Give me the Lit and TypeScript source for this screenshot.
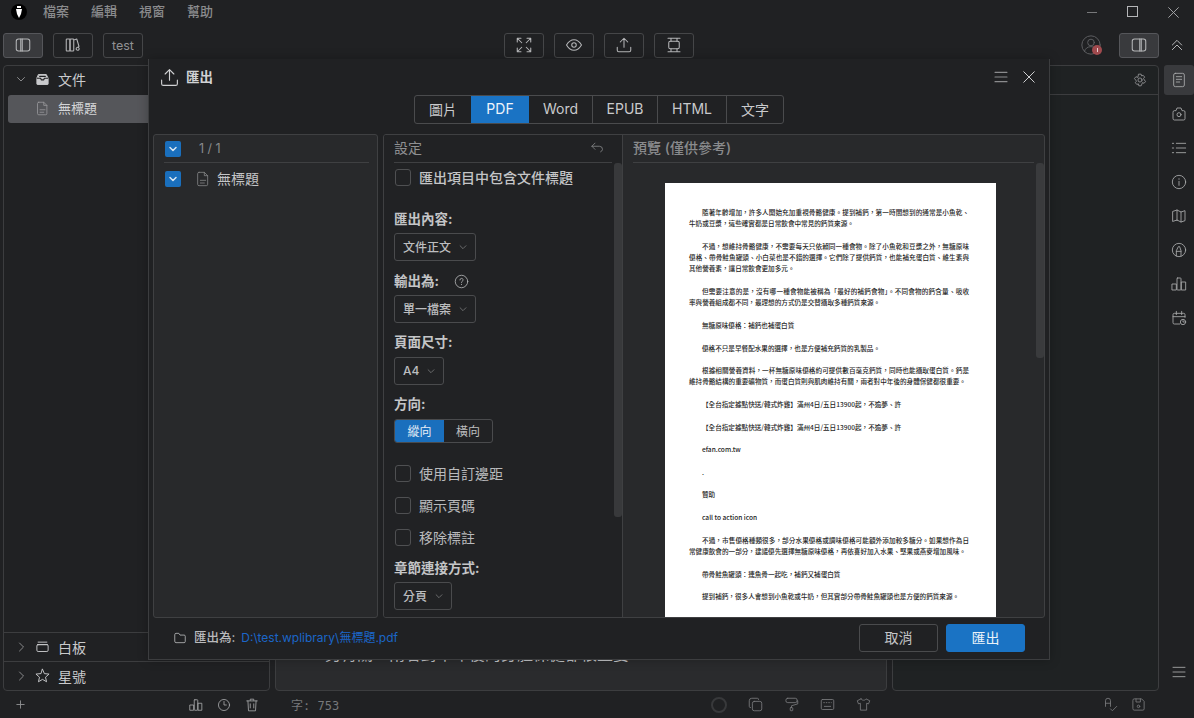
import { LitElement, html, css, svg } from 'lit';
import { customElement } from 'lit/decorators.js';

// icon outlines, all on a 24 unit box
const ICONS: Record<string, unknown> = {
  sidebarL: svg`<rect x="3" y="4" width="18" height="16" rx="3"/><path d="M9 4v16M11 4v16"/>`,
  sidebarR: svg`<rect x="3" y="4" width="18" height="16" rx="3"/><path d="M13 4v16M15 4v16"/>`,
  books: svg`<rect x="3" y="4" width="5" height="16" rx="1"/><rect x="8" y="4" width="5" height="16" rx="1"/><path d="M14 5l3-1 3 10-1 .5M17 15.500a2 2 0 1 0 3 2.500 2 2 0 0 0-3-2.500z"/>`,
  expand: svg`<path d="M3 3l6 6M3 3v5M3 3h5M21 3l-6 6M21 3v5M21 3h-5M3 21l6-6M3 21v-5M3 21h5M21 21l-6-6M21 21v-5M21 21h-5"/>`,
  eye: svg`<path d="M2 12c3-5 6-7 10-7s7 2 10 7c-3 5-6 7-10 7s-7-2-10-7z"/><circle cx="12" cy="12" r="3"/>`,
  upload: svg`<path d="M12 15V3M7 8l5-5 5 5M3 15v4a2 2 0 0 0 2 2h14a2 2 0 0 0 2-2v-4"/>`,
  focus: svg`<rect x="5" y="7" width="14" height="10" rx="2"/><path d="M4 3h16M4 21h16M8 3v4M16 3v4M8 17v4M16 17v4"/>`,
  chevDown: svg`<path d="M5 9l7 7 7-7"/>`,
  chevRight: svg`<path d="M9 4l8 8-8 8"/>`,
  chevUps: svg`<path d="M5 12l7-7 7 7M5 19l7-7 7 7"/>`,
  file: svg`<path d="M6 2h8l5 5v13a2 2 0 0 1-2 2H6a2 2 0 0 1-2-2V4a2 2 0 0 1 2-2z"/><path d="M14 2v5h5M8 14h8M8 18h6"/>`,
  inbox: svg`<path class="solid" d="M6 4h12l3 6v9a1 1 0 0 1-1 1H4a1 1 0 0 1-1-1v-9z"/><path class="slot" d="M3.500 10h5.500l1 2.500h4l1-2.500h5.500M7.500 7h9"/>`,
  box: svg`<path d="M5 5h14M4 9h16"/><rect x="3" y="9" width="18" height="11" rx="2"/>`,
  star: svg`<path d="M12 2l3 7 7.500.7-5.700 5 1.700 7.300L12 18.200 5.500 22l1.700-7.300-5.700-5L9 9z"/>`,
  menu: svg`<path d="M3 5h18M3 12h18M3 19h18"/>`,
  close: svg`<path d="M3 3l18 18M21 3L3 21"/>`,
  undo: svg`<path d="M8 5L3 10l5 5M3 10h12a5 5 0 0 1 5 5 5 5 0 0 1-3 4"/>`,
  help: svg`<circle cx="12" cy="12" r="10"/><path d="M9.500 9.500a2.500 2.500 0 1 1 3.500 2.300c-.7.4-1 .8-1 1.700M12 16.500v.5"/>`,
  folder: svg`<path d="M3 6a2 2 0 0 1 2-2h5l2 3h7a2 2 0 0 1 2 2v9a2 2 0 0 1-2 2H5a2 2 0 0 1-2-2z"/>`,
  gear: svg`<circle cx="12" cy="12" r="3.500"/><path d="M10 2h4l.7 3 2.800-1 2.500 3-2 2.400L19.500 12l2 2.600-2.500 3-2.800-1L14 22h-4l-.7-3.400-2.800 1-2.500-3 2-2.600L4.500 12l-2-2.600L5 6.400l2.800 1z"/>`,
  doc: svg`<rect x="4" y="2" width="16" height="20" rx="2.500"/><path d="M8 7h8M8 11h8M8 15h5"/>`,
  camera: svg`<path d="M3 9a2 2 0 0 1 2-2h2.500L9 3h6l1.500 4H19a2 2 0 0 1 2 2v10a2 2 0 0 1-2 2H5a2 2 0 0 1-2-2z"/><circle cx="12" cy="13" r="3"/>`,
  list: svg`<path d="M8 5h14M8 12h14M8 19h14M2 5h2M2 12h2M2 19h2"/>`,
  info: svg`<circle cx="12" cy="12" r="10"/><path d="M12 7v1M12 11v6"/>`,
  map: svg`<path d="M3 5l6-2 6 3 6-2v15l-6 2-6-3-6 2zM9 3v16M15 6v15"/>`,
  accent: svg`<circle cx="12" cy="12" r="10"/><path d="M8 21v-8l3-6h2l2 6v8M8 14h7"/>`,
  chart: svg`<rect x="2" y="12" width="6" height="9"/><rect x="9" y="3" width="6" height="18" rx="1"/><rect x="16" y="9" width="6" height="12"/>`,
  calendar: svg`<path d="M21 11V7a2 2 0 0 0-2-2H5a2 2 0 0 0-2 2v12a2 2 0 0 0 2 2h8M3 10h18M8 2v5M16 2v5"/><circle cx="18" cy="18" r="4"/><path d="M18 16v2h2"/>`,
  clock: svg`<circle cx="12" cy="12" r="9.500"/><path d="M12 6v6h4"/>`,
  trash: svg`<path d="M9 4V2h6v2M3 5h18M5 5l1 17h12l1-17M9 10v7M15 10v7"/>`,
  plus: svg`<path d="M12 4v16M4 12h16"/>`,
  copy: svg`<rect x="7" y="7" width="15" height="15" rx="3"/><path d="M4 17a2 2 0 0 1-2-2V6a4 4 0 0 1 4-4h9a2 2 0 0 1 2 2"/>`,
  roller: svg`<rect x="3" y="2" width="18" height="7" rx="3"/><path d="M21 6h1v5l-10 3v3"/><rect x="10" y="17" width="4" height="5" rx="1"/>`,
  keyboard: svg`<rect x="2" y="4" width="20" height="16" rx="2"/><path d="M6 9h1M10 9h1M14 9h1M18 9h0M7 15h10"/>`,
  shirt: svg`<path d="M8 3L2 6l2 5 3-1v11h10V10l3 1 2-5-6-3c-1 3-7 3-8 0z"/>`,
  spell: svg`<path d="M4 15V6a4 4 0 0 1 8 0v9M4 10h8M12 19l3 3 7-7"/>`,
  save: svg`<path d="M3 5a2 2 0 0 1 2-2h12l4 4v12a2 2 0 0 1-2 2H5a2 2 0 0 1-2-2z"/><path d="M8 3v5h7V3"/><circle cx="12" cy="15" r="2"/>`,
  check: svg`<path d="M6 9l6 6 6-6"/>`,
};

function icon(name: string, cls = '') {
  return html`<svg class="ic ${cls}" viewBox="0 0 24 24">${ICONS[name]}</svg>`;
}

const PARAS = [
  '隨著年齡增加，許多人開始充加重視骨骼健康。提到補鈣，第一時間想到的通常是小魚乾、牛奶或豆漿，這些確實都是日常飲食中常見的鈣質來源。',
  '不過，想維持骨骼健康，不需要每天只依賴同一種食物。除了小魚乾和豆漿之外，無糖原味優格、帶骨鮭魚罐頭、小白菜也是不錯的選擇。它們除了提供鈣質，也能補充蛋白質、維生素與其他營養素，讓日常飲食更加多元。',
  '但需要注意的是，沒有哪一種食物能被稱為「最好的補鈣食物」。不同食物的鈣含量、吸收率與營養組成都不同，最理想的方式仍是交替攝取多種鈣質來源。',
  '無糖原味優格：補鈣也補蛋白質',
  '優格不只是早餐配水果的選擇，也是方便補充鈣質的乳製品。',
  '根據相關營養資料，一杯無糖原味優格約可提供數百毫克鈣質，同時也能攝取蛋白質。鈣是維持骨骼結構的重要礦物質，而蛋白質則與肌肉維持有關，兩者對中年後的身體保健都很重要。',
  '【全台指定據點快送/韓式炸雞】滿州4日/五日13900起，不逾夢、許',
  '【全台指定據點快送/韓式炸雞】滿州4日/五日13900起，不逾夢、許',
  'efan.com.tw',
  '.',
  '贊助',
  'call to action icon',
  '不過，市售優格種類很多，部分水果優格或調味優格可能額外添加較多糖分。如果想作為日常健康飲食的一部分，建議優先選擇無糖原味優格，再依喜好加入水果、堅果或燕麥增加風味。',
  '帶骨鮭魚罐頭：連魚骨一起吃，補鈣又補蛋白質',
  '提到補鈣，很多人會想到小魚乾或牛奶，但其實部分帶骨鮭魚罐頭也是方便的鈣質來源。',
];

@customElement('app-root')
export class AppRoot extends LitElement {
  static styles = css`
    :host {
      display: block;
      position: relative;
      width: 1194px;
      height: 718px;
      overflow: hidden;
      background: #202123;
      color: #c4c5c7;
      font-family: Inter, "Noto Sans CJK TC", sans-serif;
      font-size: 14px;
    }
    * { box-sizing: border-box; }
    .ic {
      width: 16px;
      height: 16px;
      fill: none;
      stroke: currentColor;
      stroke-width: 1.600;
      stroke-linecap: round;
      stroke-linejoin: round;
      flex: none;
    }

    .titlebar { height: 24px; display: flex; align-items: center; padding-left: 11px; }
    .logo {
      width: 16px; height: 16px; border-radius: 50%;
      background: #000; display: flex; align-items: center; justify-content: center;
      margin-right: 16px;
    }
    .logo svg { width: 10px; height: 12px; }
    .menu { display: flex; gap: 22px; color: #8a8b8d; font-size: 13px; font-weight: 500; padding-bottom: 4px; }
    .winctl { margin-left: auto; display: flex; color: #a9aaac; }
    .winctl span { width: 41px; display: flex; justify-content: center; }
    .winctl .minus { width: 10px; height: 1px; background: #77787a; align-self: center; }
    .winctl .max { width: 11px; height: 11px; border: 1px solid #b5b6b8; }
    .winctl .ic { width: 13px; height: 13px; stroke-width: 1.700; }

    .toolbar { height: 26px; margin-top: 8px; padding-left: 3px; display: flex; align-items: center; }
    .tgroup { display: flex; gap: 10px; }
    .tgroup.center { margin-left: 361px; }
    .tbtn {
      width: 40px; height: 25px; border: 1px solid #454648; border-radius: 3px;
      display: flex; align-items: center; justify-content: center; color: #b5b6b8;
    }
    .tbtn.on { background: #393a3d; border-color: #55565a; }
    .tbtn.name { font-size: 12.500px; color: #919294; }
    .tbtn .ic { width: 18px; height: 18px; stroke-width: 1.400; }
    .tright { margin-left: auto; display: flex; align-items: center; }
    .avatar { position: relative; width: 20px; height: 20px; color: #5c5d60; margin-right: 18px; }
    .avatar .ic { width: 20px; height: 20px; stroke-width: 1.200; }
    .badge {
      position: absolute; right: -1px; bottom: 0; width: 10px; height: 10px;
      border-radius: 50%; background: #a04a4e;
      display: flex; align-items: center; justify-content: center;
    }
    .badge::after { content: ""; width: 1px; height: 4px; background: #e6cfd0; }
    .tright .up { width: 35px; display: flex; justify-content: center; color: #b5b6b8; }
    .tright .up .ic { width: 16px; height: 16px; stroke-width: 1.500; }

    .main { height: 626px; margin-top: 7px; padding-left: 3px; display: flex; gap: 5px; }
    .panel { border: 1px solid #3c3d3f; border-radius: 4px; width: 267px; display: flex; flex-direction: column; }
    .lib { background: #202123; }
    .librow { display: flex; align-items: center; height: 29px; padding: 0 0 3px 11px; color: #c9cacc; flex: none; }
    .librow .arrow { width: 12px; height: 12px; margin-right: 8px; color: #a2a3a5; }
    .librow .kind { width: 15px; height: 15px; margin-right: 8px; stroke-width: 1.500; }
    .librow.sep { border-top: 1px solid #3c3d3f; padding-bottom: 1px; }
    .solid { fill: #c9cacc; stroke: #c9cacc; }
    .slot { stroke: #202123; stroke-width: 1.800; }
    .doc {
      height: 28px; margin: 0 4px; background: #55565a; border-radius: 3px;
      display: flex; align-items: center; padding: 0 0 4px 27px; color: #d4d5d7; font-size: 13px; flex: none;
    }
    .doc .ic { width: 15px; height: 15px; margin: 3px 8px 0 0; color: #97989b; stroke-width: 1.300; }
    .grow { flex: 1; }

    .editor {
      flex: 1; width: auto; background: #2a2b2d; justify-content: flex-end;
      padding: 0 0 24px 49px; font-size: 16px; line-height: 24px; color: #c4c5c7;
    }
    .aside { background: #1f2223; }
    .asidehead {
      height: 29px; border-bottom: 1px solid #3c3d3f; display: flex; align-items: center;
      justify-content: flex-end; padding-right: 11px; color: #a2a3a5;
    }
    .asidehead .ic { width: 14px; height: 14px; stroke-width: 1.300; }
    .rail { width: 30px; display: flex; flex-direction: column; align-items: center; color: #a9aaac; }
    .rail span { width: 30px; height: 34px; display: flex; align-items: center; justify-content: center; }
    .rail span:first-child { height: 30px; background: #393a3d; border-radius: 3px; margin-bottom: 2px; }
    .rail .ic { width: 16px; height: 16px; stroke-width: 1.300; }
    .rail .last { margin-top: auto; margin-bottom: 2px; }

    .status { height: 27px; display: flex; align-items: center; color: #8f9092; }
    .status .ic { width: 15px; height: 15px; stroke-width: 1.400; }
    .sleft { width: 262px; padding-left: 15px; display: flex; align-items: center; }
    .status .sleft .add { width: 11px; height: 11px; margin-right: 163px; stroke-width: 2; }
    .sleft .tools { display: flex; gap: 14px; color: #a9aaac; }
    .status .sleft .tools .ic { width: 14px; height: 14px; }
    .count { margin-left: 29px; width: 420px; font-family: "DejaVu Sans Mono", "Noto Sans CJK TC", monospace; font-size: 12px; color: #77787a; }
    .stools { display: flex; align-items: center; gap: 21px; color: #77787a; }
    .ring { width: 16px; height: 16px; border: 2px solid #38393b; border-radius: 50%; }
    .sright { margin-left: auto; margin-right: 48px; display: flex; gap: 13px; color: #77787a; }

    .dialog {
      position: absolute; left: 148px; top: 59px; width: 902px; height: 601px;
      background: #202123; border: 1px solid #3c3d3f; border-top: none;
      box-shadow: 0 0 10px rgba(0, 0, 0, 0.25);
      display: flex; flex-direction: column;
    }
    .dhead { height: 36px; display: flex; align-items: center; padding: 0 13px 0 10px; flex: none; }
    .dhead .up { width: 21px; height: 21px; margin-right: 6px; color: #d0d1d3; stroke-width: 1.300; }
    .dhead b { font-size: 13.500px; font-weight: 700; color: #d2d3d5; padding-bottom: 2px; }
    .dhead .m { margin-left: auto; width: 16px; height: 16px; color: #8a8b8d; margin-right: 13px; stroke-width: 1.700; }
    .dhead .x { width: 14px; height: 14px; color: #d0d1d3; stroke-width: 1.700; }
    .tabs {
      align-self: center; display: flex; height: 29px; flex: none;
      border: 1px solid #4a4b4d; border-radius: 3px; overflow: hidden;
    }
    .tabs span {
      height: 100%; display: flex; align-items: center; justify-content: center;
      border-left: 1px solid #4a4b4d; color: #c9cacc; padding: 0 0 2px;
    }
    .tabs span:first-child { border-left: none; }
    .tabs .on { background: #1a73c4; color: #eef4fa; border-left: none; }
    .tabs .w56 { width: 56px; }
    .tabs .w57 { width: 57px; }
    .tabs .w58 { width: 58px; }
    .tabs .w63 { width: 63px; border-left: none; }
    .tabs .w65 { width: 65px; }
    .tabs .w69 { width: 69px; }
    .panels { flex: 1; min-height: 0; margin: 10px 4px 0; display: flex; gap: 5px; }
    .box { border: 1px solid #3f4042; border-radius: 3px; height: 484px; }
    .pick { width: 225px; background: #28292b; padding: 0 8px 0 10px; }
    .pickhead {
      height: 28px; border-bottom: 1px solid #3f4042; display: flex; align-items: center;
      padding-left: 1px; color: #8a8b8d; font-size: 12.500px;
    }
    .pickhead .num { margin-left: 18px; }
    .pickrow { display: flex; align-items: center; height: 16px; margin-top: 8px; padding-left: 1px; color: #c4c5c7; }
    .pickrow .ic { width: 16px; height: 16px; margin: 0 6px 0 14px; color: #858688; stroke-width: 1.200; }
    .pickrow span { padding-bottom: 2px; }
    .cb {
      width: 16px; height: 16px; border-radius: 2px; background: #1a6fbd;
      display: flex; align-items: center; justify-content: center; flex: none;
    }
    .pickrow .cb .ic, .pickhead .cb .ic { width: 12px; height: 12px; stroke-width: 3; margin: 0; color: #dbe7f2; }

    .mid { flex: 1; display: flex; overflow: hidden; background: #28292b; }
    .settings { width: 239px; background: #212224; border-right: 1px solid #3f4042; position: relative; padding: 0 8px 0 10px; flex: none; }
    .sechead {
      height: 28px; border-bottom: 1px solid #3f4042; display: flex; align-items: center;
      color: #8f9092; width: 218px; padding-bottom: 3px;
    }
    .sechead .ic { margin-left: auto; width: 15px; height: 15px; stroke-width: 1.200; margin-right: 7px; }
    .thumb { position: absolute; border-radius: 3px; background: #38393b; width: 8px; top: 28px; right: 0; }
    .settings .thumb { height: 354px; }
    .preview .thumb { height: 195px; right: 0; background: #3a3b3d; }
    .line { display: flex; align-items: flex-start; line-height: 17px; color: #b9babc; height: 17px; margin-top: 15px; padding-left: 1px; }
    .line.first { margin-top: 6px; color: #c4c5c7; font-weight: 500; }
    .line.gap { margin-top: 22px; }
    .tick { width: 16px; height: 17px; border: 1px solid #4f5052; border-radius: 3px; margin-right: 8px; }
    .label { height: 20px; line-height: 20px; margin: 10px 0 4px; font-weight: 700; font-size: 13.500px; color: #c4c5c7; display: flex; align-items: center; }
    .label.top { margin-top: 23px; }
    .label.tight { margin: 9px 0 5px; }
    .label.after { margin: 12px 0 4px; }
    .label .ic { width: 15px; height: 15px; margin-left: 15px; stroke-width: 1.300; color: #b5b6b8; }
    .select {
      display: inline-flex; align-items: center; height: 28px; border: 1px solid #4a4b4d; border-radius: 3px;
      padding: 0 7px 2px 8px; font-size: 12px; font-weight: 500; color: #bcbdbf; gap: 7px;
    }
    .select .ic { width: 10px; height: 10px; margin-top: 2px; color: #77787a; stroke-width: 2; }
    .seg { display: flex; height: 24px; width: 99px; border: 1px solid #4a4b4d; border-radius: 3px; overflow: hidden; font-size: 12px; }
    .seg span { flex: 1; display: flex; align-items: center; justify-content: center; color: #bcbdbf; padding-bottom: 1px; }
    .seg .on { background: #1a6fbd; color: #e6eef6; flex: none; width: 49px; }

    .preview { flex: 1; position: relative; padding: 0 10px; overflow: hidden; }
    .preview .sechead { width: 401px; color: #8a8b8d; font-weight: 500; }
    .paper {
      width: 331px; height: 440px; margin: 20px 0 0 32px; background: #fff; color: #262626;
      padding: 24px 27px 0 24px; font-size: 6.600px; font-weight: 500; line-height: 11.300px; overflow: hidden;
    }
    .paper p { margin: 0 0 11.300px; text-align: justify; text-indent: 13px; font-family: "Noto Sans CJK TC", sans-serif; }

    .dfoot { height: 41px; flex: none; display: flex; align-items: center; padding: 0 24px 1px 24px; }
    .dfoot .ic { width: 14px; height: 14px; color: #b9babc; margin-right: 7px; stroke-width: 1.400; }
    .dfoot .lb { font-size: 12.500px; color: #b9babc; font-weight: 500; margin-right: 6px; padding-bottom: 3px; }
    .dfoot a { color: #1b66c9; font-size: 12px; padding-bottom: 3px; }
    .btn {
      width: 79px; height: 28px; border-radius: 3px; display: flex; align-items: center; justify-content: center;
      margin-left: 8px; border: 1px solid #4a4b4d; color: #c4c5c7; padding-bottom: 2px;
    }
    .btn.first { margin-left: auto; }
    .btn.primary { background: #1a73c4; border-color: #1a73c4; color: #e9f1f8; }
  `;

  private labelBlock(text: string, value: string, cls = '') {
    return html`<div class="label ${cls}">${text}</div>
      <div class="select">${value}${icon('chevDown')}</div>`;
  }

  render() {
    return html`
      <div class="titlebar">
        <div class="logo">
          <svg viewBox="0 0 10 12"><path fill="#fff" d="M3 0h4v2H3zM2 3h6l-1 5-2 4-2-4z"/></svg>
        </div>
        <div class="menu"><span>檔案</span><span>編輯</span><span>視窗</span><span>幫助</span></div>
        <div class="winctl">
          <span><i class="minus"></i></span><span><i class="max"></i></span><span>${icon('close')}</span>
        </div>
      </div>

      <div class="toolbar">
        <div class="tgroup">
          <div class="tbtn on">${icon('sidebarL')}</div>
          <div class="tbtn">${icon('books')}</div>
          <div class="tbtn name">test</div>
        </div>
        <div class="tgroup center">
          <div class="tbtn">${icon('expand')}</div>
          <div class="tbtn">${icon('eye')}</div>
          <div class="tbtn">${icon('upload')}</div>
          <div class="tbtn">${icon('focus')}</div>
        </div>
        <div class="tright">
          <div class="avatar">
            <svg class="ic" viewBox="0 0 24 24"><circle cx="12" cy="12" r="11"/><circle cx="12" cy="9" r="4"/><path d="M4 20c1-4 4-6 8-6s7 2 8 6"/></svg>
            <i class="badge"></i>
          </div>
          <div class="tbtn on">${icon('sidebarR')}</div>
          <div class="up">${icon('chevUps')}</div>
        </div>
      </div>

      <div class="main">
        <div class="panel lib">
          <div class="librow">${icon('chevDown', 'arrow')}${icon('inbox', 'kind')}文件</div>
          <div class="doc">${icon('file')}無標題</div>
          <div class="grow"></div>
          <div class="librow sep">${icon('chevRight', 'arrow')}${icon('box', 'kind')}白板</div>
          <div class="librow sep">${icon('chevRight', 'arrow')}${icon('star', 'kind')}星號</div>
        </div>
        <div class="panel editor">另有關，兩者對中年後的身體保健都很重要。</div>
        <div class="panel aside">
          <div class="asidehead">${icon('gear')}</div>
        </div>
        <div class="rail">
          <span>${icon('doc')}</span>
          <span>${icon('camera')}</span>
          <span>${icon('list')}</span>
          <span>${icon('info')}</span>
          <span>${icon('map')}</span>
          <span>${icon('accent')}</span>
          <span>${icon('chart')}</span>
          <span>${icon('calendar')}</span>
          <span class="last">${icon('menu')}</span>
        </div>
      </div>

      <div class="status">
        <div class="sleft">
          ${icon('plus', 'add')}
          <div class="tools">${icon('chart')}${icon('clock')}${icon('trash')}</div>
        </div>
        <div class="count">字: 753</div>
        <div class="stools">
          <i class="ring"></i>${icon('copy')}${icon('roller')}${icon('keyboard')}${icon('shirt')}
        </div>
        <div class="sright">${icon('spell')}${icon('save')}</div>
      </div>

      <div class="dialog">
        <div class="dhead">
          ${icon('upload', 'up')}<b>匯出</b>
          ${icon('menu', 'm')}${icon('close', 'x')}
        </div>
        <div class="tabs">
          <span class="w56">圖片</span><span class="on w58">PDF</span><span class="w63">Word</span>
          <span class="w65">EPUB</span><span class="w69">HTML</span><span class="w57">文字</span>
        </div>
        <div class="panels">
          <div class="box pick">
            <div class="pickhead"><div class="cb">${icon('check')}</div><span class="num">1 / 1</span></div>
            <div class="pickrow"><div class="cb">${icon('check')}</div>${icon('file')}<span>無標題</span></div>
          </div>
          <div class="box mid">
            <div class="settings">
              <div class="sechead">設定${icon('undo')}</div>
              <div class="thumb"></div>
              <div class="line first"><i class="tick"></i>匯出項目中包含文件標題</div>
              ${this.labelBlock('匯出內容:', '文件正文', 'top')}
              <div class="label">輸出為:${icon('help')}</div>
              <div class="select">單一檔案${icon('chevDown')}</div>
              ${this.labelBlock('頁面尺寸:', 'A4', 'tight')}
              <div class="label tight">方向:</div>
              <div class="seg"><span class="on">縱向</span><span>橫向</span></div>
              <div class="line gap"><i class="tick"></i>使用自訂邊距</div>
              <div class="line"><i class="tick"></i>顯示頁碼</div>
              <div class="line"><i class="tick"></i>移除標註</div>
              ${this.labelBlock('章節連接方式:', '分頁', 'after')}
            </div>
            <div class="preview">
              <div class="sechead">預覽 (僅供參考)</div>
              <div class="thumb"></div>
              <div class="paper">${PARAS.map((p) => html`<p>${p}</p>`)}</div>
            </div>
          </div>
        </div>
        <div class="dfoot">
          ${icon('folder')}<span class="lb">匯出為:</span><a>D:\\test.wplibrary\\無標題.pdf</a>
          <div class="btn first">取消</div>
          <div class="btn primary">匯出</div>
        </div>
      </div>
    `;
  }
}
